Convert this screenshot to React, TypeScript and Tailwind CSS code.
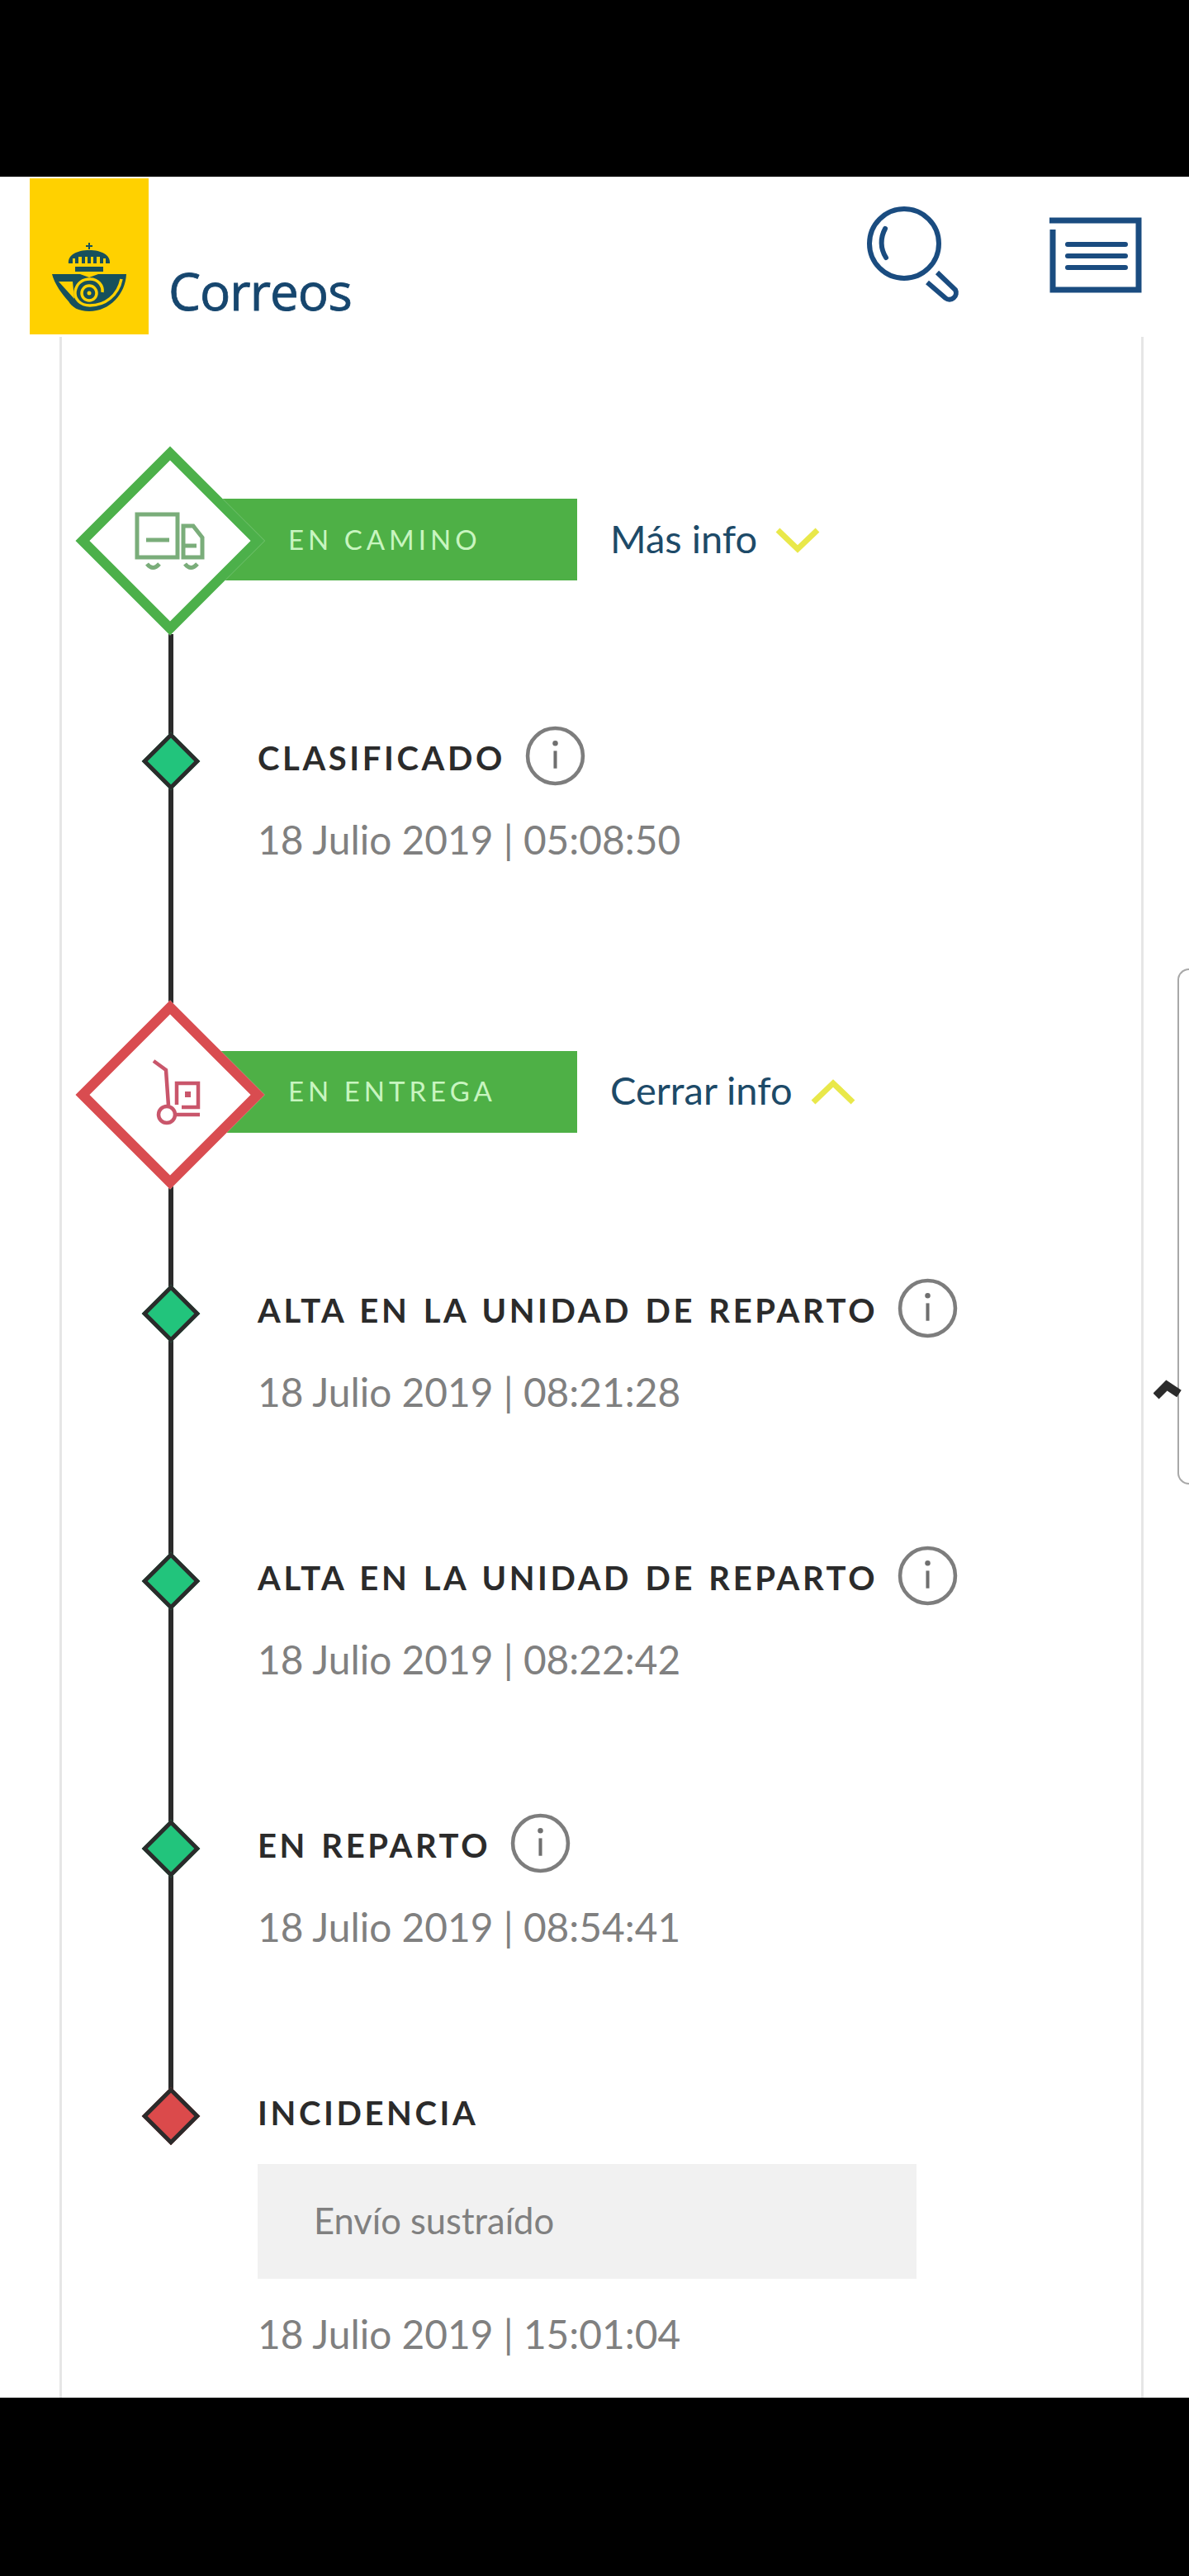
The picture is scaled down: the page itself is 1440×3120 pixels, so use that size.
import React from "react";

const font = { fontFamily: '"Lato", "Open Sans", sans-serif' };

function Info() {
  return (
    <svg width="73" height="73" viewBox="0 0 72 72" className="shrink-0 mb-[6px]">
      <circle cx="36" cy="36" r="33" fill="none" stroke="#7d7d7d" strokeWidth="4.5" />
      <circle cx="36" cy="21" r="3.2" fill="#6f6f6f" />
      <rect x="34" y="30" width="4" height="21" fill="#6f6f6f" />
    </svg>
  );
}

function SmallRow({ title, date, icon = true, top, dateGap = "mt-[33px]", red = false, children }: { title: string; date: string; icon?: boolean; top: string; dateGap?: string; red?: boolean; children?: React.ReactNode }) {
  return (
    <div className={`relative z-10 flex ${top}`}>
      <div className="w-[237px] shrink-0 h-[72px] flex items-center pl-[107px]">
        <div className={`w-[50px] h-[50px] mt-[8px] rotate-45 border-[5px] border-[#2b2b2b] ${red ? "bg-[#db4a4b]" : "bg-[#22c47c]"}`} />
      </div>
      <div className="flex flex-col">
        <div className="h-[72px] flex items-center gap-[24px]">
          <span className="text-[40px] leading-none font-bold tracking-[3.6px] [word-spacing:3px] text-[#2b2b2b] whitespace-nowrap">{title}</span>
          {icon && <Info />}
        </div>
        {children}
        <div className={`h-[60px] flex items-center text-[47.8px] leading-none text-[#808080] whitespace-nowrap ${dateGap}`}>{date}</div>
      </div>
    </div>
  );
}

function BigRow({ label, link, red = false, up = false, top, lift }: { label: string; link: string; red?: boolean; up?: boolean; top: string; lift: string }) {
  return (
    <div className={`relative z-10 flex items-center h-[226px] pl-[50px] ${top}`}>
      <div className="relative z-10 w-[162px] h-[162px] shrink-0 flex items-center justify-center">
        <div className={`absolute inset-0 rotate-45 bg-white border-[12px] ${red ? "border-[#d94c50]" : "border-[#4cb04a]"}`} />
        <svg width="96" height="96" viewBox="0 0 96 96" className="relative">
          {red ? (
            <g fill="none" stroke="#c9566b" strokeWidth="4.5">
              <path d="M28 7 L43 18 L46 61" />
              <circle cx="44" cy="72" r="10" />
              <path d="M56 72 H84" />
              <path d="M56 60 V34 H82 V63 H62" />
              <rect x="66" y="44" width="7" height="7" fill="#c9566b" stroke="none" />
            </g>
          ) : (
            <g fill="none" stroke="#7aad7a" strokeWidth="5">
              <rect x="8" y="16" width="49" height="52" />
              <path d="M19 47 H47" />
              <path d="M64 68 V30 H76 L87 44 V68 Z" />
              <path d="M63 54 H80" />
              <path d="M20 76 Q27 85 35 76" />
              <path d="M66 76 Q73 85 81 76" />
            </g>
          )}
        </svg>
      </div>
      <div className={`flex items-center ${lift}`}>
        <div className="ml-[-39px] w-[451px] h-[99px] pl-[101px] bg-[#4eb046] flex items-center text-[33px] tracking-[5px] text-[#c8f5c0] whitespace-nowrap">{label}</div>
        <div className="ml-[40px] mb-[3px] flex items-center gap-[22px] text-[47px] leading-none text-[#1d4a68] whitespace-nowrap">
          <span>{link}</span>
          <svg width="54" height="34" viewBox="0 0 54 34" className="mt-[4px]">
            <path d={up ? "M3 29 L27 6 L51 29" : "M3 5 L27 28 L51 5"} fill="none" stroke="#e9e84a" strokeWidth="7" />
          </svg>
        </div>
      </div>
    </div>
  );
}

export default function App() {
  return (
    <div className="w-[1440px] h-[3120px] bg-black flex flex-col overflow-hidden relative" style={font}>
      <div className="h-[214px] shrink-0" />
      <div className="h-[2690px] shrink-0 bg-white flex flex-col">
        <header className="h-[194px] shrink-0 flex items-start pt-[2px] pl-[36px]">
          <div className="w-[144px] h-[189px] bg-[#ffd100] flex items-end justify-center pb-[27px]">
            <svg width="90" height="84" viewBox="0 0 90 84">
              <g fill="#17505c">
                <path d="M44 0 H46 V3 H49 V5 H46 V8 H44 V5 H41 V3 H44 Z" />
                <path d="M20 25 C19 15 30 9 45 9 C60 9 71 15 70 25 H65 V19 H62 V25 H58 V17 H54 V25 H50 V17 H47 V25 H43 V17 H40 V25 H36 V17 H32 V25 H28 V19 H25 V25 Z" />
                <rect x="28" y="29" width="34" height="6" />
                <path d="M0 38 H34 L45 42 L56 38 H90 C89 62 70 83 45 83 C32 83 24 78 20 71 C12 62 3 50 0 38 Z" />
              </g>
              <path d="M8 47 H25 L27 68 Z" fill="#ffd100" />
              <g fill="none" stroke="#ffd100" strokeWidth="3.5">
                <path d="M84 44 C80 64 64 76 46 76 C34 76 27 68 28 59 C30 48 38 44 46 44 C56 44 62 52 61 60" />
                <circle cx="45" cy="61" r="9" />
              </g>
              <circle cx="45" cy="61" r="2.5" fill="#ffd100" />
            </svg>
          </div>
          <div className="ml-[24px] mt-[98px] text-[62px] leading-[76px] text-[#16466e] tracking-[-1px] [-webkit-text-stroke:0.8px_#16466e]" style={{ fontFamily: '"Open Sans", sans-serif' }}>Correos</div>
          <svg width="124" height="124" viewBox="0 0 124 124" className="ml-auto mt-[30px]">
            <g fill="none" stroke="#1a4c80" strokeWidth="6">
              <circle cx="50" cy="49" r="42" />
              <path d="M27 31 C21 42 21 55 28 66" strokeLinecap="round" />
              <path d="M90 84 L112 105 A8 8 0 0 1 100 115 L78 96" />
            </g>
          </svg>
          <svg width="112" height="92" viewBox="0 0 112 92" className="ml-[102px] mt-[47px] mr-[57px]">
            <g fill="none" stroke="#1a4c80">
              <path d="M0 4 H108 V88 H4 V15" strokeWidth="7" />
              <path d="M22 33 H92 M22 47 H92 M22 61 H92" strokeWidth="6" strokeLinecap="round" />
            </g>
          </svg>
        </header>
        <main className="relative flex-1 min-h-0 overflow-hidden ml-[72px] mr-[55px] border-x-[3px] border-[#e6e6e6] pt-[134px]">
          <div className="absolute left-[129px] top-[360px] w-[6px] h-[1800px] bg-[#2b2b2b]" />
          <BigRow label="EN CAMINO" link="Más info" top="" lift="mb-[3px]" />
          <SmallRow title="CLASIFICADO" date="18 Julio 2019 | 05:08:50" top="mt-[114px]" />
          <BigRow label="EN ENTREGA" link="Cerrar info" red up top="mt-[166px]" lift="mb-[8px]" />
          <SmallRow title="ALTA EN LA UNIDAD DE REPARTO" date="18 Julio 2019 | 08:21:28" top="mt-[112px]" />
          <SmallRow title="ALTA EN LA UNIDAD DE REPARTO" date="18 Julio 2019 | 08:22:42" top="mt-[159px]" />
          <SmallRow title="EN REPARTO" date="18 Julio 2019 | 08:54:41" top="mt-[159px]" />
          <SmallRow title="INCIDENCIA" date="18 Julio 2019 | 15:01:04" icon={false} red top="mt-[159px]" dateGap="mt-[37px]">
            <div className="mt-[26px] w-[798px] h-[139px] bg-[#f1f1f1] flex items-center pl-[68px] pb-[2px] text-[43.5px] text-[#808080]">Envío sustraído</div>
          </SmallRow>
        </main>
      </div>
      <div className="absolute left-[1426px] top-[1173px] w-[14px] h-[625px] border-y-2 border-l-2 border-[#a8a8a8] rounded-l-[18px]" />
      <svg width="34" height="34" viewBox="0 0 34 34" className="absolute left-[1397px] top-[1667px]">
        <path d="M3 24 L16 11 L31 21" fill="none" stroke="#2b2b2b" strokeWidth="10" />
      </svg>
    </div>
  );
}
